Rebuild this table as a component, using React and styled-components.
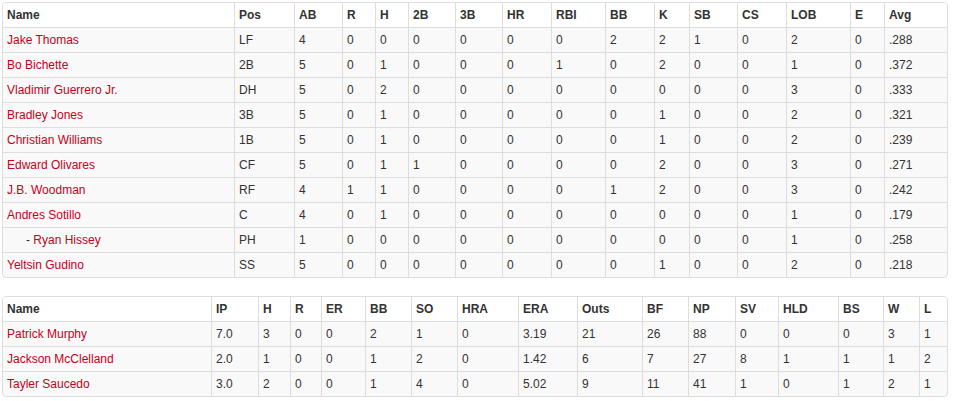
import React from 'react'
import styled, { createGlobalStyle } from 'styled-components'

const GlobalStyle = createGlobalStyle`
    body{
        margin: 0;
        background: #fff;
        font-family: "Liberation Sans", Arial, Helvetica, sans-serif;
        font-size: 12px;
        color: #333;
    }
`;

const battingCols = [231, 60, 48, 33, 33, 47, 47, 49, 54, 49, 35, 48, 49, 64, 34, 65]
const battingHead = ['Name', 'Pos', 'AB', 'R', 'H', '2B', '3B', 'HR', 'RBI', 'BB', 'K', 'SB', 'CS', 'LOB', 'E', 'Avg']
const batters = [
    { name: 'Jake Thomas', stats: ['LF', 4, 0, 0, 0, 0, 0, 0, 2, 2, 1, 0, 2, 0, '.288'] },
    { name: 'Bo Bichette', stats: ['2B', 5, 0, 1, 0, 0, 0, 1, 0, 2, 0, 0, 1, 0, '.372'] },
    { name: 'Vladimir Guerrero Jr.', stats: ['DH', 5, 0, 2, 0, 0, 0, 0, 0, 0, 0, 0, 3, 0, '.333'] },
    { name: 'Bradley Jones', stats: ['3B', 5, 0, 1, 0, 0, 0, 0, 0, 1, 0, 0, 2, 0, '.321'] },
    { name: 'Christian Williams', stats: ['1B', 5, 0, 1, 0, 0, 0, 0, 0, 1, 0, 0, 2, 0, '.239'] },
    { name: 'Edward Olivares', stats: ['CF', 5, 0, 1, 1, 0, 0, 0, 0, 2, 0, 0, 3, 0, '.271'] },
    { name: 'J.B. Woodman', stats: ['RF', 4, 1, 1, 0, 0, 0, 0, 1, 2, 0, 0, 3, 0, '.242'] },
    { name: 'Andres Sotillo', stats: ['C', 4, 0, 1, 0, 0, 0, 0, 0, 0, 0, 0, 1, 0, '.179'] },
    { name: 'Ryan Hissey', sub: true, stats: ['PH', 1, 0, 0, 0, 0, 0, 0, 0, 0, 0, 0, 1, 0, '.258'] },
    { name: 'Yeltsin Gudino', stats: ['SS', 5, 0, 0, 0, 0, 0, 0, 0, 1, 0, 0, 2, 0, '.218'] },
]

const pitchingCols = [208, 47, 32, 31, 44, 46, 46, 61, 59, 65, 46, 47, 43, 60, 45, 36, 30]
const pitchingHead = ['Name', 'IP', 'H', 'R', 'ER', 'BB', 'SO', 'HRA', 'ERA', 'Outs', 'BF', 'NP', 'SV', 'HLD', 'BS', 'W', 'L']
const pitchers = [
    { name: 'Patrick Murphy', stats: ['7.0', 3, 0, 0, 2, 1, 0, '3.19', 21, 26, 88, 0, 0, 0, 3, 1] },
    { name: 'Jackson McClelland', stats: ['2.0', 1, 0, 0, 1, 2, 0, '1.42', 6, 7, 27, 8, 1, 1, 1, 2] },
    { name: 'Tayler Saucedo', stats: ['3.0', 2, 0, 0, 1, 4, 0, '5.02', 9, 11, 41, 1, 0, 1, 2, 1] },
]

function StatTable({ cols, head, rows }) {
    return (
        <TableWrap>
            <Table>
                <colgroup>
                    {cols.map((w, i) => <col key={i} style={{ width: w }} />)}
                </colgroup>
                <thead>
                    <tr>
                        {head.map((h) => <Th key={h}>{h}</Th>)}
                    </tr>
                </thead>
                <tbody>
                    {rows.map((row) => (
                        <tr key={row.name}>
                            <Td>
                                {row.sub && <Indent>- </Indent>}
                                <PlayerLink href="#">{row.name}</PlayerLink>
                            </Td>
                            {row.stats.map((s, i) => <Td key={i}>{s}</Td>)}
                        </tr>
                    ))}
                </tbody>
            </Table>
        </TableWrap>
    )
}

function App() {
    return (
        <Page>
            <GlobalStyle />
            <StatTable cols={battingCols} head={battingHead} rows={batters} />
            <StatTable cols={pitchingCols} head={pitchingHead} rows={pitchers} />
        </Page>
    )
}

const Page = styled.div`
    display: flex;
    flex-direction: column;
    gap: 18px;
    padding: 2px 6px 0 2px;
    width: 946px;
`;

const TableWrap = styled.div`
    border: 1px solid #ddd;
    border-radius: 4px;
    overflow: hidden;
    background: #f9f9f9;
`;

const Table = styled.table`
    width: 100%;
    table-layout: fixed;
    border-collapse: separate;
    border-spacing: 0;
    font-size: 12px;
    line-height: 14px;
    tbody tr td{
        border-top: 1px solid #ddd;
    }
`;

const cell = `
    height: 14px;
    padding: 5px 4px;
    text-align: left;
    white-space: nowrap;
    overflow: hidden;
    border-left: 1px solid #ddd;
    &:first-child{
        border-left: none;
        padding-left: 4px;
    }
`;

const Th = styled.th`
    ${cell}
    background: #fff;
    font-weight: bold;
    color: #333;
`;

const Td = styled.td`
    ${cell}
    height: 13px;
    color: #333;
`;

const PlayerLink = styled.a`
    color: #c4001a;
    text-decoration: none;
`;

const Indent = styled.span`
    padding-left: 19px;
    color: #333;
`;

export default App
